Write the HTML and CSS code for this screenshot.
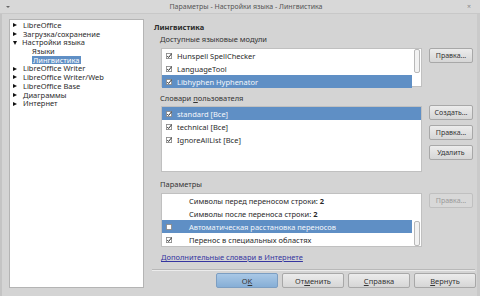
FILE: index.html
```html
<!DOCTYPE html>
<html lang="ru">
<head>
<meta charset="UTF-8">
<title>Параметры - Настройки языка - Лингвистика</title>
<link rel="stylesheet" href="styles.css">
</head>
<body>

<div class="titlebar">
    <span class="menu-arrow"></span>
    <span class="title">Параметры - Настройки языка - Лингвистика</span>
    <span class="close">×</span>
</div>

<div class="window">
    <div class="tree">
        <div class="node"><span class="arrow"></span>LibreOffice</div>
        <div class="node"><span class="arrow"></span>Загрузка/сохранение</div>
        <div class="node"><span class="arrow open"></span>Настройки языка</div>
        <div class="node sub">Языки</div>
        <div class="node sub"><span class="selected">Лингвистика</span></div>
        <div class="node"><span class="arrow"></span>LibreOffice Writer</div>
        <div class="node"><span class="arrow"></span>LibreOffice Writer/Web</div>
        <div class="node"><span class="arrow"></span>LibreOffice Base</div>
        <div class="node"><span class="arrow"></span>Диаграммы</div>
        <div class="node"><span class="arrow"></span>Интернет</div>
    </div>

    <div class="page">
        <div class="heading">Лингвистика</div>

        <div class="label label-modules">Доступные языковые модули</div>
        <div class="section">
            <div class="list list-modules">
                <div class="rows">
                    <div class="item"><svg class="check" viewBox="0 0 7 7"><rect x="0.5" y="0.5" width="6" height="6" fill="#fff" stroke="#8a8a8a"/><path d="M1.5 3.6 L3 5.2 L6.6 0.8" fill="none" stroke="#222" stroke-width="1.1"/></svg>Hunspell SpellChecker</div>
                    <div class="item"><svg class="check" viewBox="0 0 7 7"><rect x="0.5" y="0.5" width="6" height="6" fill="#fff" stroke="#8a8a8a"/><path d="M1.5 3.6 L3 5.2 L6.6 0.8" fill="none" stroke="#222" stroke-width="1.1"/></svg>LanguageTool</div>
                    <div class="item active"><svg class="check" viewBox="0 0 7 7"><rect x="0.5" y="0.5" width="6" height="6" fill="#fff" stroke="#8a8a8a"/><path d="M1.5 3.6 L3 5.2 L6.6 0.8" fill="none" stroke="#222" stroke-width="1.1"/></svg>Libhyphen Hyphenator</div>
                </div>
                <div class="scrollbar"><div class="thumb thumb-top"></div></div>
            </div>
            <div class="side-buttons">
                <button class="btn">Правка...</button>
            </div>
        </div>

        <div class="label label-dicts">Словари <u>п</u>ользователя</div>
        <div class="section">
            <div class="list list-dicts">
                <div class="rows">
                    <div class="item active"><svg class="check" viewBox="0 0 7 7"><rect x="0.5" y="0.5" width="6" height="6" fill="#fff" stroke="#8a8a8a"/><path d="M1.5 3.6 L3 5.2 L6.6 0.8" fill="none" stroke="#222" stroke-width="1.1"/></svg>standard [Все]</div>
                    <div class="item"><svg class="check" viewBox="0 0 7 7"><rect x="0.5" y="0.5" width="6" height="6" fill="#fff" stroke="#8a8a8a"/><path d="M1.5 3.6 L3 5.2 L6.6 0.8" fill="none" stroke="#222" stroke-width="1.1"/></svg>technical [Все]</div>
                    <div class="item"><svg class="check" viewBox="0 0 7 7"><rect x="0.5" y="0.5" width="6" height="6" fill="#fff" stroke="#8a8a8a"/><path d="M1.5 3.6 L3 5.2 L6.6 0.8" fill="none" stroke="#222" stroke-width="1.1"/></svg>IgnoreAllList [Все]</div>
                </div>
            </div>
            <div class="side-buttons">
                <button class="btn">Создать...</button>
                <button class="btn">Правка...</button>
                <button class="btn">Удалить</button>
            </div>
        </div>

        <div class="label label-params">Параметры</div>
        <div class="section">
            <div class="list list-params">
                <div class="rows">
                    <div class="item option"><span class="box-space"></span><span>Символы перед переносом строки: <b>2</b></span></div>
                    <div class="item option"><span class="box-space"></span><span>Символы после переноса строки: <b>2</b></span></div>
                    <div class="item option active"><svg class="check wide" viewBox="0 0 7 7"><rect x="0.5" y="0.5" width="6" height="6" fill="#fff" stroke="#8a8a8a"/></svg>Автоматическая расстановка переносов</div>
                    <div class="item option"><svg class="check wide" viewBox="0 0 7 7"><rect x="0.5" y="0.5" width="6" height="6" fill="#fff" stroke="#8a8a8a"/><path d="M1.5 3.6 L3 5.2 L6.6 0.8" fill="none" stroke="#222" stroke-width="1.1"/></svg>Перенос в специальных областях</div>
                </div>
                <div class="scrollbar"><div class="thumb thumb-bottom"></div></div>
            </div>
            <div class="side-buttons">
                <button class="btn" disabled>Правка...</button>
            </div>
        </div>

        <a class="more-link" href="#">Дополнительные словари в Интернете</a>

        <div class="separator"></div>

        <div class="dialog-buttons">
            <button class="btn big default">O<u>K</u></button>
            <button class="btn big">От<u>м</u>енить</button>
            <button class="btn big"><u>С</u>правка</button>
            <button class="btn big"><u>В</u>ернуть</button>
        </div>
    </div>
</div>

</body>
</html>
```

FILE: styles.css
```css
body {
    margin: 0;
    width: 480px;
    height: 296px;
    overflow: hidden;
    background-color: #d4d4d4;
    font-family: "Noto Sans", "Open Sans", sans-serif;
    font-size: 7.5px;
    color: #2a2a2a;
}
.titlebar {
    height: 14px;
    display: flex;
    align-items: center;
    background-color: #d8d8d8;
    border-bottom: 1px solid #c8c8c8;
    box-sizing: border-box;
}
.menu-arrow {
    margin-left: 6px;
    border-left: 2px solid transparent;
    border-right: 2px solid transparent;
    border-top: 2px solid #666;
}
.title {
    flex: 1;
    text-align: center;
    color: #555;
    font-size: 7px;
    margin-left: 20px;
}
.close {
    width: 14px;
    margin-right: 4px;
    color: #888;
    font-size: 7px;
    text-align: center;
}
.window {
    display: flex;
    height: 282px;
    padding-top: 5px;
    box-sizing: border-box;
    border-left: 2px solid #c4c4c4;
    border-right: 3px solid #cacaca;
}
.tree {
    width: 135px;
    height: 269px;
    margin-left: 7px;
    padding-top: 1px;
    box-sizing: border-box;
    background-color: #fff;
    border: 1px solid #b4b4b4;
}
.node {
    height: 8.7px;
    line-height: 8.7px;
    display: flex;
    align-items: center;
    padding-left: 3px;
    white-space: nowrap;
}
.node.sub {
    padding-left: 22px;
}
.arrow {
    width: 0;
    height: 0;
    margin-right: 6px;
    border-top: 2.5px solid transparent;
    border-bottom: 2.5px solid transparent;
    border-left: 4px solid #111;
}
.arrow.open {
    border-left: 2.5px solid transparent;
    border-right: 2.5px solid transparent;
    border-top: 4px solid #111;
    border-bottom: 0;
    margin-right: 5px;
}
.selected {
    background-color: #5f8fc5;
    color: #fff;
    padding: 0 1px;
}
.page {
    flex: 1;
    margin-left: 6px;
    display: flex;
    flex-direction: column;
}
.heading {
    font-weight: bold;
    height: 10px;
    line-height: 10px;
    margin-top: 3px;
    margin-left: 4px;
}
.label {
    height: 10px;
    line-height: 10px;
    margin-left: 10px;
    color: #333;
}
.label-modules {
    margin-top: 2px;
    margin-bottom: 4px;
}
.label-dicts {
    margin-top: 6px;
    margin-bottom: 3px;
}
.label-params {
    margin-top: 7px;
    margin-bottom: 4px;
}
.section {
    display: flex;
    align-items: flex-start;
    margin-left: 11px;
}
.list {
    flex: 1;
    display: flex;
    background-color: #fff;
    border: 1px solid #c0c0c0;
    box-sizing: border-box;
}
.list-modules {
    height: 39px;
}
.list-dicts {
    height: 66px;
}
.list-params {
    height: 54px;
}
.rows {
    flex: 1;
}
.item {
    height: 13px;
    display: flex;
    align-items: center;
    padding-left: 4px;
    white-space: nowrap;
}
.item.active {
    background-color: #5f8fc5;
    color: #f4f7fb;
}
.check {
    width: 6px;
    height: 6px;
    margin-right: 5px;
}
.check.wide {
    margin-right: 17px;
}
.box-space {
    width: 23px;
}
.scrollbar {
    width: 6px;
    margin: 0 1px 0 2px;
    display: flex;
    flex-direction: column;
}
.thumb {
    height: 24px;
    background-color: #f2f2f2;
    border: 1px solid #b8b8b8;
    border-radius: 2px;
    box-sizing: border-box;
}
.thumb-bottom {
    margin-top: auto;
    height: 25px;
}
.side-buttons {
    width: 44px;
    margin-left: 7px;
    margin-right: 4px;
    display: flex;
    flex-direction: column;
    gap: 5px;
}
.list-dicts + .side-buttons {
    margin-top: -1px;
}
.btn {
    height: 15px;
    padding: 0;
    font-family: inherit;
    font-size: 7px;
    color: #333;
    background: linear-gradient(#ececec, #d6d6d6);
    border: 1px solid #a8a8a8;
    border-radius: 2px;
}
.btn:disabled {
    color: #9a9a9a;
    background: #d8d8d8;
    border-color: #c0c0c0;
}
.more-link {
    height: 10px;
    line-height: 10px;
    margin-top: 5px;
    margin-left: 11px;
    color: #3535a0;
    text-decoration: underline;
    align-self: flex-start;
}
.separator {
    height: 0;
    margin-top: 7px;
    margin-left: 2px;
    margin-right: 2px;
    border-top: 1px solid #b8b8b8;
    border-bottom: 1px solid #ececec;
}
.dialog-buttons {
    display: flex;
    justify-content: flex-end;
    gap: 4px;
    margin-top: 2px;
    margin-right: 1px;
}
.btn.big {
    width: 62px;
    font-size: 7.5px;
}
.btn.default {
    background: linear-gradient(#a9c8e6, #86aed6);
    border-color: #7c9ec2;
}
```
